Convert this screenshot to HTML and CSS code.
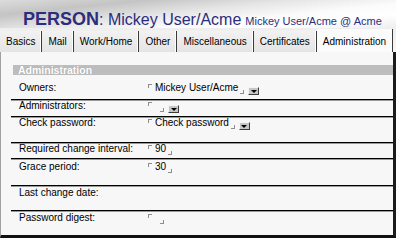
FILE: index.html
```html
<!DOCTYPE html>
<html>
<head>
<meta charset="utf-8">
<link rel="stylesheet" href="styles.css">
</head>
<body>
<div class="page">
  <header class="header">
    <span class="kind">PERSON</span><span class="name">: Mickey User/Acme</span><span class="sub">Mickey User/Acme @ Acme</span>
  </header>
  <nav class="tabs">
    <span class="tab">Basics</span>
    <span class="tab">Mail</span>
    <span class="tab">Work/Home</span>
    <span class="tab">Other</span>
    <span class="tab">Miscellaneous</span>
    <span class="tab">Certificates</span>
    <span class="tab active">Administration</span>
  </nav>
  <main class="panel">
    <div class="section">Administration</div>
    <div class="row r1">
      <span class="label">Owners:</span>
      <span class="value"><i class="mk tl"></i><span class="ftext">Mickey User/Acme</span><i class="mk br"></i><span class="drop"><i class="tri"></i></span></span>
    </div>
    <div class="row r2">
      <span class="label">Administrators:</span>
      <span class="value"><i class="mk tl"></i><span class="empty"></span><i class="mk br"></i><span class="drop"><i class="tri"></i></span></span>
    </div>
    <div class="row r3">
      <span class="label">Check password:</span>
      <span class="value"><i class="mk tl"></i><span class="ftext">Check password</span><i class="mk br"></i><span class="drop"><i class="tri"></i></span></span>
    </div>
    <div class="row r4">
      <span class="label">Required change interval:</span>
      <span class="value"><i class="mk tl"></i><span class="ftext">90</span><i class="mk br"></i></span>
    </div>
    <div class="row r5">
      <span class="label">Grace period:</span>
      <span class="value"><i class="mk tl"></i><span class="ftext">30</span><i class="mk br"></i></span>
    </div>
    <div class="row r6">
      <span class="label">Last change date:</span>
      <span class="value"></span>
    </div>
    <div class="row r7">
      <span class="label">Password digest:</span>
      <span class="value"><i class="mk tl"></i><span class="empty"></span><i class="mk br"></i></span>
    </div>
  </main>
</div>
</body>
</html>
```
FILE: styles.css
```css
* { box-sizing: border-box; }
html, body { margin: 0; padding: 0; }
body {
  width: 396px;
  height: 238px;
  overflow: hidden;
  font-family: "Liberation Sans", Arial, sans-serif;
  background: #ffffff;
  color: #000;
}
.page {
  width: 396px;
  height: 238px;
  display: flex;
  flex-direction: column;
}
.header {
  height: 28px;
  display: flex;
  align-items: baseline;
  padding: 10px 0 0 23px;
  line-height: 18px;
  color: #2b2d7d;
  white-space: nowrap;
  background: linear-gradient(174deg, #dcdcdc 0%, #c4c4c4 22%, #e6e6e6 45%, #fbfbfb 65%, #ffffff 80%, #eeeeee 100%);
}
.kind { font-size: 18px; font-weight: bold; }
.name { font-size: 16px; }
.sub { font-size: 11px; margin-left: 4px; }

.tabs {
  height: 24px;
  display: flex;
  align-items: flex-end;
  background: linear-gradient(180deg, #eeeeee 0%, #f7f7f7 100%);
  font-size: 10px;
  white-space: nowrap;
}
.tab {
  height: 21px;
  display: flex;
  align-items: center;
  padding: 0 6px 0 6px;
  border-right: 1px solid #3a3a3a;
  box-shadow: inset -1px 0 0 #ffffff;
  background: linear-gradient(180deg, #f2f2f2 0%, #e4e4e4 100%);
}
.tab.active {
  height: 23px;
  padding-top: 2px;
  background: #fbfbfb;
}

.panel {
  flex: 1;
  background: #f7f7f7;
  border-left: 1px solid #a0a0a0;
  border-right: 3px solid #1b1b1b;
  border-bottom: 3px solid #111;
  padding: 13px 0 0 10px;
  display: flex;
  flex-direction: column;
}
.section {
  height: 10px;
  margin-left: 2px;
  padding-left: 5px;
  background: #bdbdbd;
  color: #ffffff;
  font-weight: bold;
  font-size: 10.5px;
  line-height: 10px;
  text-shadow: 0 0 1px #9a9a9a;
}
.row {
  display: flex;
  flex: none;
  padding-left: 8px;
  font-size: 10px;
  line-height: 12px;
  border-bottom: 1px solid #000;
  box-shadow: 0 1px 0 #9a9a9a;
}
.r1 { height: 25px; padding-top: 7px; }
.r2 { height: 17px; padding-top: 0; }
.r3 { height: 26px; padding-top: 0; }
.r4 { height: 16px; padding-top: 0; }
.r5 { height: 27px; padding-top: 2px; }
.r6 { height: 25px; padding-top: 1px; }
.r7 { flex: 1; padding-top: 1px; border-bottom: none; box-shadow: none; }

.label { width: 129px; flex: none; }
.value { display: flex; align-items: flex-start; }
.ftext { margin-left: 3px; }
.empty { width: 6px; }
.mk {
  display: block;
  width: 4px;
  height: 4px;
  flex: none;
}
.mk.tl {
  margin-top: 2px;
  border-top: 1px solid #8e8e8e;
  border-left: 1px solid #8e8e8e;
}
.mk.br {
  margin-top: 8px;
  margin-left: 2px;
  border-bottom: 1px solid #8e8e8e;
  border-right: 1px solid #8e8e8e;
}
.drop {
  display: flex;
  align-items: center;
  justify-content: center;
  width: 11px;
  height: 8px;
  margin-top: 5px;
  margin-left: 4px;
  background: #c6c6c6;
  border: 1px solid;
  border-color: #f4f4f4 #3c3c3c #3c3c3c #f4f4f4;
}
.tri {
  display: block;
  width: 0;
  height: 0;
  border-left: 3px solid transparent;
  border-right: 3px solid transparent;
  border-top: 3px solid #000;
}
```
